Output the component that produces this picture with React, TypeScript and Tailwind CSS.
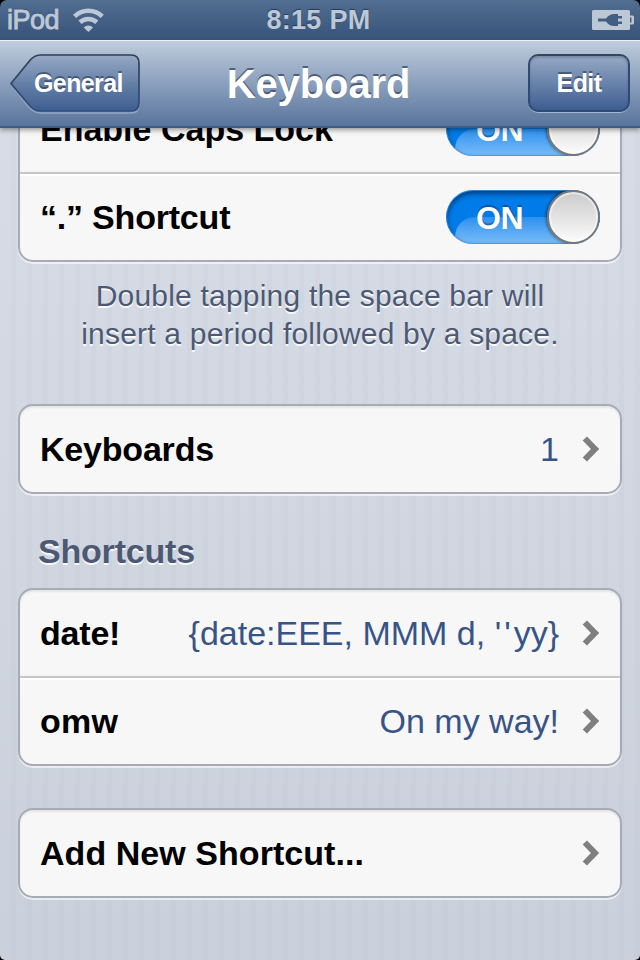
import type { ReactNode } from "react";

function Chevron() {
  return (
    <svg width="18" height="26" viewBox="0 0 18 26" className="block">
      <path d="M2.800 2.500 13 13 2.800 23.500" fill="none" stroke="#7f7f7f" strokeWidth="6" />
    </svg>
  );
}

function Switch() {
  return (
    <div className="relative h-[54px] w-[154px] overflow-hidden rounded-full bg-[#017be8]">
      <div className="absolute top-[27px] left-[9px] h-[40px] w-[170px] rounded-tl-[20px] bg-linear-to-b from-[#2b90ee] to-[#76bbf8] to-65%" />
      <div className="absolute inset-0 rounded-full border border-[#4f87ba]/70 shadow-[inset_0_3px_5px_rgba(0,30,80,0.65)]" />
      <div className="absolute top-[9px] left-[30px] text-[32px] leading-[38px] font-bold tracking-[-0.5px] text-white [text-shadow:0_-2px_1px_rgba(0,50,110,0.5)]">
        ON
      </div>
      <div className="absolute top-0 right-0 h-[54px] w-[53px] rounded-full border-2 border-[#777] bg-linear-to-b from-[#cbcbcb] to-[#fbfbfb] shadow-[-1px_0_3px_rgba(0,0,0,0.45),inset_0_0_0_2px_rgba(255,255,255,0.5)]" />
    </div>
  );
}

function Card({ children, className = "" }: { children: ReactNode; className?: string }) {
  return (
    <div
      className={`mx-[18px] rounded-[15px] border-2 border-[#a6abb5] bg-[#f7f7f7] shadow-[0_2px_0_rgba(255,255,255,0.6),inset_0_2px_2px_rgba(0,0,0,0.07)] ${className}`}
    >
      {children}
    </div>
  );
}

function Row({ label, children, divider = false, labelClass = "tracking-[-0.2px]" }: { label: ReactNode; children: ReactNode; divider?: boolean; labelClass?: string }) {
  return (
    <div className={`flex items-center justify-between px-5 ${divider ? "h-[88px] border-b-2 border-[#c6c6c6] shadow-[0_2px_0_#ffffff]" : "h-[86px]"}`}>
      <div className={`text-[34px] leading-[40px] font-bold whitespace-nowrap text-black ${labelClass}`}>{label}</div>
      {children}
    </div>
  );
}

function Value({ text }: { text: ReactNode }) {
  return (
    <div className="flex items-center gap-[23px]">
      <span className="text-[34px] leading-[40px] whitespace-nowrap text-[#385487]">{text}</span>
      <Chevron />
    </div>
  );
}

export default function App() {
  return (
    <div className="flex h-[960px] w-[640px] flex-col overflow-hidden bg-black font-['Liberation_Sans',Arial,sans-serif]">
      <div className="relative z-10 grid h-10 shrink-0 grid-cols-3 items-center rounded-t-[7px] bg-linear-to-b from-[#526f92] to-[#3c587e] to-80% text-[#bdc8d6] [text-shadow:0_-1px_1px_rgba(20,40,70,0.7)]">
        <div className="flex items-center pl-[7px]">
          <span className="text-[27px] leading-[38px] tracking-[-0.5px] [-webkit-text-stroke:0.9px_#bdc8d6]">iPod</span>
          <svg width="34" height="26" viewBox="0 0 34 26" className="ml-[13px]" fill="none" stroke="#bdc8d6">
            <path d="M2.600 9.300a20 20 0 0 1 27.600 0" strokeWidth="4.600" />
            <path d="M8 15.300a12.300 12.300 0 0 1 16.800 0" strokeWidth="4.600" />
            <path d="M16.400 25l-4.700-4.600a6.700 6.700 0 0 1 9.400 0z" fill="#bdc8d6" stroke="none" />
          </svg>
        </div>
        <div className="mr-[3px] text-center text-[27px] leading-[38px] font-bold tracking-[0.3px] whitespace-nowrap">8:15 PM</div>
        <div className="flex justify-end pr-[6px]">
          <svg width="43" height="22" viewBox="0 0 43 22">
            <path d="M2.500 1h35a1.500 1.500 0 0 1 1.500 1.500V6.500h2.500a1.500 1.500 0 0 1 1.500 1.500v6a1.500 1.500 0 0 1-1.500 1.500H39V19.500a1.500 1.500 0 0 1-1.500 1.500h-35A1.500 1.500 0 0 1 1 19.500v-17A1.500 1.500 0 0 1 2.500 1zM39 8.500v5h1.500v-5z" fill="#bdc8d6" fillRule="evenodd" />
            <path d="M7 9.500h8c2-3 5-4.500 8-4.500h4v2h4v2.500h-4v3h4V15h-4v2h-4c-3 0-6-1.500-8-4.500H7z" fill="#425e83" />
          </svg>
        </div>
      </div>

      <header className="relative z-10 flex h-[88px] shrink-0 items-start justify-between border-t border-b-2 border-t-[#e9eff5] border-b-[#405c84] bg-linear-to-b from-[#bfcddd] to-[#59749c] px-[10px] pt-[13px] shadow-[0_2px_5px_rgba(0,0,0,0.4)]">
        <div className="relative h-[59px] w-[130px]">
          <svg width="131" height="60" viewBox="0 0 131 60" className="absolute inset-0">
            <defs>
              <linearGradient id="backFill" x1="0" y1="0" x2="0" y2="1">
                <stop offset="0" stopColor="#97a9c5" />
                <stop offset="0.5" stopColor="#6580a7" />
                <stop offset="1" stopColor="#3e5e91" />
              </linearGradient>
              <linearGradient id="backEdge" x1="0" y1="0" x2="0" y2="1">
                <stop offset="0" stopColor="#323d4f" />
                <stop offset="1" stopColor="#304f7c" />
              </linearGradient>
            </defs>
            <path d="M1 30.500 18 9Q24 2 30 2H121Q129 2 129 10V51Q129 59 121 59H30Q24 59 18 52Z" fill="none" stroke="#a4b5cd" strokeOpacity="0.7" strokeWidth="1.500" />
            <path d="M1 29.500 19 7.500Q24 1 30 1H121Q129 1 129 9V49Q129 57 121 57H30Q24 57 19 51Z" fill="url(#backFill)" stroke="url(#backEdge)" strokeWidth="1.700" />
          </svg>
          <span className="relative ml-[24px] block text-[25px] leading-[58px] font-bold tracking-[-0.6px] text-white [text-shadow:0_-2px_0_rgba(40,55,80,0.6)]">General</span>
        </div>
        <h1 className="mr-[31px] text-[40px] leading-[60px] font-bold tracking-[-0.1px] text-white [text-shadow:0_-2px_0_rgba(55,70,95,0.75)]">Keyboard</h1>
        <button className="h-[58px] w-[102px] rounded-[10px] border-2 border-[#304b73] border-t-[#384459] bg-linear-to-b from-[#97a9c5] to-[#3e5e91] text-[25px] leading-[54px] font-bold tracking-[-0.6px] text-white shadow-[0_1px_0_rgba(190,205,225,0.7),inset_0_2px_2px_rgba(40,50,70,0.25)] [text-shadow:0_-2px_0_rgba(40,55,80,0.6)]">
          Edit
        </button>
      </header>

      <main className="h-[832px] overflow-hidden rounded-b-[5px] bg-[linear-gradient(to_bottom,rgba(224,229,238,0.4),rgba(190,196,208,0.35)),repeating-linear-gradient(to_right,#d1d7e1_0px,#d1d7e1_11px,#cbd1dd_11px,#cbd1dd_16px)]">
        <Card className="mt-[-44px]">
          <Row label="Enable Caps Lock" labelClass="tracking-[0]" divider>
            <Switch />
          </Row>
          <Row label={<>“.” Shortcut</>}>
            <Switch />
          </Row>
        </Card>
        <p className="mt-[15px] text-center text-[30px] leading-[38px] tracking-[0.2px] text-[#4d5973] [text-shadow:0_2px_0_rgba(255,255,255,0.85)]">
          Double tapping the space bar will
          <br />
          insert a period followed by a space.
        </p>
        <Card className="mt-[51px]">
          <Row label="Keyboards">
            <Value text="1" />
          </Row>
        </Card>
        <h2 className="mt-[37px] ml-[38px] text-[34px] leading-[40px] font-bold tracking-[-0.2px] text-[#4d5973] [text-shadow:0_2px_0_rgba(255,255,255,0.85)]">Shortcuts</h2>
        <Card className="mt-[17px]">
          <Row label="date!" divider>
            <Value
              text={<>{"{date:EEE, MMM d, "}<span className="tracking-[3px]">''</span>{"yy}"}</>}
            />
          </Row>
          <Row label="omw" labelClass="tracking-[0.2px]">
            <Value text="On my way!" />
          </Row>
        </Card>
        <Card className="mt-[42px]">
          <Row label="Add New Shortcut..." labelClass="tracking-[0.05px]">
            <Chevron />
          </Row>
        </Card>
      </main>
    </div>
  );
}
